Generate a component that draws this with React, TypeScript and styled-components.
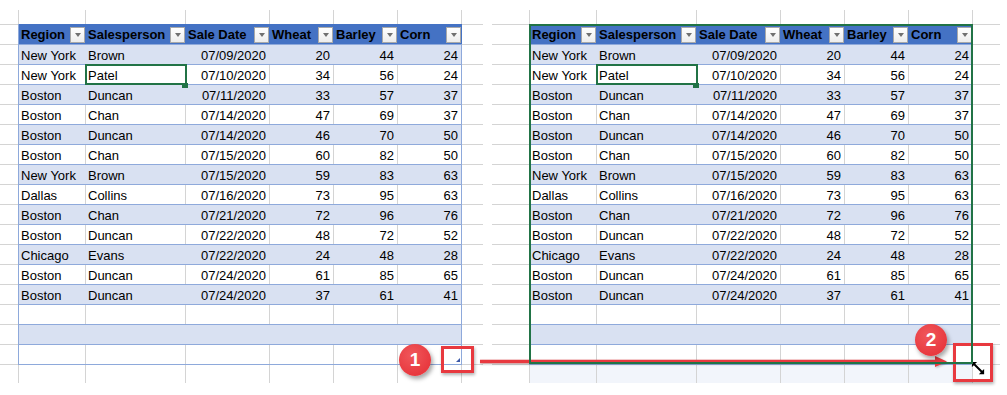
import React from 'react'
import styled, { createGlobalStyle } from 'styled-components'

const GRID = '#d4d4d4'
const BAND = '#d9e1f2'
const HEAD = '#4472c4'
const RULE = '#8ea9db'
const GREEN = '#217346'
const RED = '#e8393f'

const COLS = [67, 100, 84, 64, 64, 64]
const HEADERS = ['Region', 'Salesperson', 'Sale Date', 'Wheat', 'Barley', 'Corn']

type Record = [string, string, string, number, number, number]

const RECORDS: Record[] = [
  ['New York', 'Brown', '07/09/2020', 20, 44, 24],
  ['New York', 'Patel', '07/10/2020', 34, 56, 24],
  ['Boston', 'Duncan', '07/11/2020', 33, 57, 37],
  ['Boston', 'Chan', '07/14/2020', 47, 69, 37],
  ['Boston', 'Duncan', '07/14/2020', 46, 70, 50],
  ['Boston', 'Chan', '07/15/2020', 60, 82, 50],
  ['New York', 'Brown', '07/15/2020', 59, 83, 63],
  ['Dallas', 'Collins', '07/16/2020', 73, 95, 63],
  ['Boston', 'Chan', '07/21/2020', 72, 96, 76],
  ['Boston', 'Duncan', '07/22/2020', 48, 72, 52],
  ['Chicago', 'Evans', '07/22/2020', 24, 48, 28],
  ['Boston', 'Duncan', '07/24/2020', 61, 85, 65],
  ['Boston', 'Duncan', '07/24/2020', 37, 61, 41],
]

// three empty table rows follow the data
const EMPTY_ROWS = 3

const GlobalStyle = createGlobalStyle`
  html, body {
    margin: 0;
    padding: 0;
    background: #fff;
  }
  body {
    font-family: 'Liberation Sans', Arial, sans-serif;
    color: #000;
  }
`

const Page = styled.div`
  position: relative;
  display: flex;
  gap: 9px;
  width: 1007px;
  height: 395px;
  overflow: hidden;
`

const Pane = styled.div`
  display: flex;
  align-items: flex-start;
  padding-top: 10px;
`

const Gutter = styled.div<{ $width: number }>`
  width: ${p => p.$width}px;
  margin-top: 14px;
  border-bottom: 1px solid ${GRID};
`

const GutterLine = styled.div`
  height: 20px;
  box-sizing: border-box;
  border-top: 1px solid ${GRID};
`

const Center = styled.div`
  display: flex;
  flex-direction: column;
`

const Strip = styled.div<{ $height: number; $preview?: boolean }>`
  display: flex;
  height: ${p => p.$height}px;
  border-left: 1px solid ${GRID};
  background: ${p => (p.$preview ? '#f2f5fb' : 'transparent')};
`

const StripCell = styled.div<{ $w: number }>`
  width: ${p => p.$w}px;
  box-sizing: border-box;
  border-right: 1px solid ${GRID};
`

const Table = styled.div<{ $selected?: boolean; $handle?: boolean }>`
  position: relative;
  border-left: 1px solid ${RULE};
  border-bottom: 1px solid ${RULE};

  /* selection frame drawn over the cells */
  &::before {
    content: '';
    display: ${p => (p.$selected ? 'block' : 'none')};
    position: absolute;
    inset: 0 0 0 -1px;
    border: 2px solid ${GREEN};
    z-index: 3;
    pointer-events: none;
  }

  &::after {
    content: '';
    display: ${p => (p.$handle ? 'block' : 'none')};
    position: absolute;
    right: 2px;
    bottom: 2px;
    width: 0;
    height: 0;
    border-style: solid;
    border-width: 0 0 4px 4px;
    border-color: transparent transparent #3b58a8 transparent;
  }
`

const HeaderRow = styled.div`
  display: flex;
  height: 20px;
  background: ${HEAD};
`

const HeaderCell = styled.div<{ $w: number }>`
  display: flex;
  align-items: flex-end;
  justify-content: space-between;
  width: ${p => p.$w}px;
  box-sizing: border-box;
  padding: 0 1px 1px 2px;
  font-size: 13px;
  font-weight: bold;
`

const HeaderLabel = styled.span`
  line-height: 15px;
  margin-bottom: 1px;
  white-space: nowrap;
`

const FilterButton = styled.div`
  display: flex;
  align-items: center;
  justify-content: center;
  width: 15px;
  height: 16px;
  box-sizing: border-box;
  border: 1px solid #a9a9a9;
  background: linear-gradient(#ffffff, #ededed);

  &::after {
    content: '';
    border-left: 3.5px solid transparent;
    border-right: 3.5px solid transparent;
    border-top: 4px solid #707070;
  }
`

const Row = styled.div<{ $band: boolean }>`
  display: flex;
  height: 20px;
  box-sizing: border-box;
  border-top: 1px solid ${RULE};
  background: ${p => (p.$band ? BAND : '#fff')};
`

const Cell = styled.div<{ $w: number; $right?: boolean; $line: string; $active?: boolean }>`
  position: ${p => (p.$active ? 'relative' : 'static')};
  display: flex;
  align-items: flex-end;
  justify-content: ${p => (p.$right ? 'flex-end' : 'flex-start')};
  width: ${p => p.$w}px;
  box-sizing: border-box;
  padding: 0 3px 1px 2px;
  border-right: 1px solid ${p => p.$line};
  font-size: 13px;
  line-height: 15px;
  white-space: nowrap;
  z-index: ${p => (p.$active ? 1 : 'auto')};
  outline: ${p => (p.$active ? `2px solid ${GREEN}` : 'none')};
  outline-offset: -1px;

  &::after {
    content: '';
    display: ${p => (p.$active ? 'block' : 'none')};
    position: absolute;
    right: -3px;
    bottom: -4px;
    width: 6px;
    height: 5px;
    background: ${GREEN};
  }
`

const Badge = styled.div<{ $x: number; $y: number }>`
  position: absolute;
  left: ${p => p.$x}px;
  top: ${p => p.$y}px;
  display: flex;
  align-items: center;
  justify-content: center;
  width: 32px;
  height: 32px;
  border-radius: 50%;
  background: radial-gradient(circle at 40% 35%, #f0575b, ${RED} 70%);
  color: #fff;
  font-size: 19px;
  font-weight: bold;
  box-shadow: 2px 3px 4px rgba(0, 0, 0, 0.35);
`

const Frame = styled.div<{ $x: number; $y: number; $w: number; $h: number }>`
  position: absolute;
  left: ${p => p.$x}px;
  top: ${p => p.$y}px;
  width: ${p => p.$w}px;
  height: ${p => p.$h}px;
  box-sizing: border-box;
  border: 3px solid ${RED};
  box-shadow: 1px 2px 3px rgba(0, 0, 0, 0.3);
`

const Arrow = styled.svg`
  position: absolute;
  left: 478px;
  top: 354px;
  filter: drop-shadow(1px 1px 1px rgba(0, 0, 0, 0.25));
`

const Cursor = styled.svg`
  position: absolute;
  left: 971px;
  top: 361px;
`

function cellLine(band: boolean, last: boolean) {
  if (last) return RULE
  return band ? 'transparent' : GRID
}

interface SheetProps {
  left: number
  right: number
  selected?: boolean
  handle?: boolean
  preview?: boolean
}

const Sheet: React.FC<SheetProps> = ({ left, right, selected, handle, preview }) => {
  const total = RECORDS.length + EMPTY_ROWS
  const lines = Array.from({ length: total + 1 })

  return (
    <Pane>
      <Gutter $width={left}>
        {lines.map((_, i) => (
          <GutterLine key={i} />
        ))}
      </Gutter>
      <Center>
        <Strip $height={14}>
          {COLS.map((w, i) => (
            <StripCell key={i} $w={w} />
          ))}
        </Strip>
        <Table $selected={selected} $handle={handle}>
          <HeaderRow>
            {HEADERS.map((h, i) => (
              <HeaderCell key={h} $w={COLS[i]}>
                <HeaderLabel>{h}</HeaderLabel>
                <FilterButton />
              </HeaderCell>
            ))}
          </HeaderRow>
          {Array.from({ length: total }).map((_, r) => {
            const rec = RECORDS[r]
            const band = r % 2 === 0
            return (
              <Row key={r} $band={band}>
                {COLS.map((w, c) => (
                  <Cell
                    key={c}
                    $w={w}
                    $right={c >= 2}
                    $line={cellLine(band, c === COLS.length - 1)}
                    $active={r === 1 && c === 1}
                  >
                    {rec ? rec[c] : ''}
                  </Cell>
                ))}
              </Row>
            )
          })}
        </Table>
        <Strip $height={18} $preview={preview}>
          {COLS.map((w, i) => (
            <StripCell key={i} $w={w} />
          ))}
        </Strip>
      </Center>
      <Gutter $width={right}>
        {lines.map((_, i) => (
          <GutterLine key={i} />
        ))}
      </Gutter>
    </Pane>
  )
}

const App: React.FC = () => {
  return (
    <>
      <GlobalStyle />
      <Page>
        <Sheet left={18} right={21} handle />
        <Sheet left={37} right={27} selected preview />

        <Arrow width="472" height="16" viewBox="0 0 472 16">
          <line x1="2" y1="7.5" x2="460" y2="7.5" stroke={RED} strokeWidth="3.5" />
          <polygon points="457,2 469,7.5 457,13" fill={RED} />
        </Arrow>
        <Frame $x={441} $y={346} $w={33} $h={27} />
        <Frame $x={953} $y={343} $w={40} $h={39} />
        <Badge $x={399} $y={344}>1</Badge>
        <Badge $x={915} $y={324}>2</Badge>
        <Cursor width="14" height="14" viewBox="0 0 16 16">
          <path
            d="M1 1 L7 1 L4.8 3.2 L12.8 11.2 L15 9 L15 15 L9 15 L11.2 12.8 L3.2 4.8 L1 7 Z"
            fill="#000"
            stroke="#fff"
            strokeWidth="1.2"
            strokeLinejoin="round"
            paintOrder="stroke"
          />
        </Cursor>
      </Page>
    </>
  )
}

export default App
